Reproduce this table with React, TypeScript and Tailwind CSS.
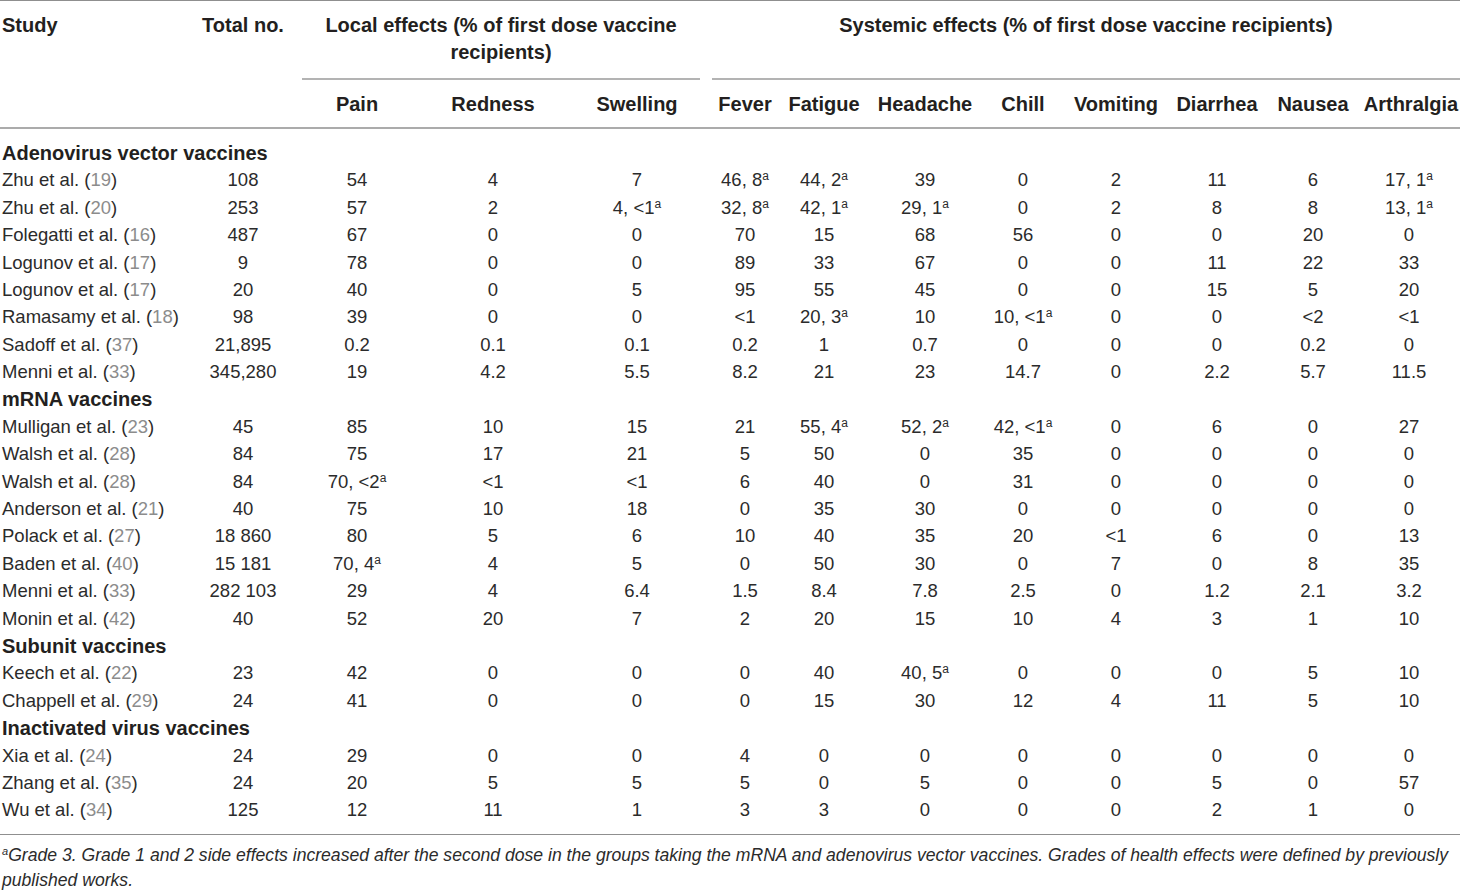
const cols =
  "grid grid-cols-[190px_112px_110px_162px_126px_12px_66px_92px_110px_86px_100px_102px_90px_102px]";

type Row = { cat: string } | { name: string; ref: string; vals: string[] };

const rows: Row[] = [
  { cat: "Adenovirus vector vaccines" },
  { name: "Zhu et al.", ref: "19", vals: ["108", "54", "4", "7", "46, 8^", "44, 2^", "39", "0", "2", "11", "6", "17, 1^"] },
  { name: "Zhu et al.", ref: "20", vals: ["253", "57", "2", "4, <1^", "32, 8^", "42, 1^", "29, 1^", "0", "2", "8", "8", "13, 1^"] },
  { name: "Folegatti et al.", ref: "16", vals: ["487", "67", "0", "0", "70", "15", "68", "56", "0", "0", "20", "0"] },
  { name: "Logunov et al.", ref: "17", vals: ["9", "78", "0", "0", "89", "33", "67", "0", "0", "11", "22", "33"] },
  { name: "Logunov et al.", ref: "17", vals: ["20", "40", "0", "5", "95", "55", "45", "0", "0", "15", "5", "20"] },
  { name: "Ramasamy et al.", ref: "18", vals: ["98", "39", "0", "0", "<1", "20, 3^", "10", "10, <1^", "0", "0", "<2", "<1"] },
  { name: "Sadoff et al.", ref: "37", vals: ["21,895", "0.2", "0.1", "0.1", "0.2", "1", "0.7", "0", "0", "0", "0.2", "0"] },
  { name: "Menni et al.", ref: "33", vals: ["345,280", "19", "4.2", "5.5", "8.2", "21", "23", "14.7", "0", "2.2", "5.7", "11.5"] },
  { cat: "mRNA vaccines" },
  { name: "Mulligan et al.", ref: "23", vals: ["45", "85", "10", "15", "21", "55, 4^", "52, 2^", "42, <1^", "0", "6", "0", "27"] },
  { name: "Walsh et al.", ref: "28", vals: ["84", "75", "17", "21", "5", "50", "0", "35", "0", "0", "0", "0"] },
  { name: "Walsh et al.", ref: "28", vals: ["84", "70, <2^", "<1", "<1", "6", "40", "0", "31", "0", "0", "0", "0"] },
  { name: "Anderson et al.", ref: "21", vals: ["40", "75", "10", "18", "0", "35", "30", "0", "0", "0", "0", "0"] },
  { name: "Polack et al.", ref: "27", vals: ["18 860", "80", "5", "6", "10", "40", "35", "20", "<1", "6", "0", "13"] },
  { name: "Baden et al.", ref: "40", vals: ["15 181", "70, 4^", "4", "5", "0", "50", "30", "0", "7", "0", "8", "35"] },
  { name: "Menni et al.", ref: "33", vals: ["282 103", "29", "4", "6.4", "1.5", "8.4", "7.8", "2.5", "0", "1.2", "2.1", "3.2"] },
  { name: "Monin et al.", ref: "42", vals: ["40", "52", "20", "7", "2", "20", "15", "10", "4", "3", "1", "10"] },
  { cat: "Subunit vaccines" },
  { name: "Keech et al.", ref: "22", vals: ["23", "42", "0", "0", "0", "40", "40, 5^", "0", "0", "0", "5", "10"] },
  { name: "Chappell et al.", ref: "29", vals: ["24", "41", "0", "0", "0", "15", "30", "12", "4", "11", "5", "10"] },
  { cat: "Inactivated virus vaccines" },
  { name: "Xia et al.", ref: "24", vals: ["24", "29", "0", "0", "4", "0", "0", "0", "0", "0", "0", "0"] },
  { name: "Zhang et al.", ref: "35", vals: ["24", "20", "5", "5", "5", "0", "5", "0", "0", "5", "0", "57"] },
  { name: "Wu et al.", ref: "34", vals: ["125", "12", "11", "1", "3", "3", "0", "0", "0", "2", "1", "0"] },
];

function Cell({ v }: { v: string }) {
  // trailing ^ marks a grade 3 footnote
  if (v.endsWith("^")) {
    return (
      <span>
        {v.slice(0, -1)}
        <sup className="text-[12px]">a</sup>
      </span>
    );
  }
  return <span>{v}</span>;
}

export default function App() {
  return (
    <div className="h-[892px] w-[1460px] overflow-hidden bg-white font-['Liberation_Sans',Arial,sans-serif] text-[18.5px] text-[#2b2b2b]">
      <div className="h-px bg-[#8f8f8f]" />

      {/* header */}
      <div className={`${cols} h-[79px] text-[20px] font-bold text-[#231f20]`}>
        <div className="pl-[2px] pt-[11px] leading-[27px]">Study</div>
        <div className="pt-[11px] pr-[6px] text-center leading-[27px]">Total no.</div>
        <div className="col-span-3 flex flex-col">
          <div className="flex-1 px-4 pt-[11px] text-center leading-[27px]">
            Local effects (% of first dose vaccine recipients)
          </div>
          <div className="h-[2px] bg-[#b3b3b3]" />
        </div>
        <div />
        <div className="col-span-8 flex flex-col">
          <div className="flex-1 pt-[11px] text-center leading-[27px]">
            Systemic effects (% of first dose vaccine recipients)
          </div>
          <div className="h-[2px] bg-[#b3b3b3]" />
        </div>
      </div>
      <div className={`${cols} h-[47px] items-center text-[20px] font-bold text-[#231f20]`}>
        <div />
        <div />
        <div className="text-center">Pain</div>
        <div className="text-center">Redness</div>
        <div className="text-center">Swelling</div>
        <div />
        <div className="text-center">Fever</div>
        <div className="text-center">Fatigue</div>
        <div className="text-center">Headache</div>
        <div className="text-center">Chill</div>
        <div className="text-center">Vomiting</div>
        <div className="text-center">Diarrhea</div>
        <div className="text-center">Nausea</div>
        <div className="whitespace-nowrap pl-1 text-center">Arthralgia</div>
      </div>
      <div className="h-[2px] bg-[#ababab]" />

      {/* body */}
      <div className="pt-[10px] pb-[10px]">
        {rows.map((r, i) =>
          "cat" in r ? (
            <div key={i} className="flex h-[27.4px] items-center pl-[2px] text-[20px] font-bold text-[#231f20]">
              {r.cat}
            </div>
          ) : (
            <div key={i} className={`${cols} h-[27.4px] items-center whitespace-nowrap`}>
              <div className="pl-[2px]">
                {r.name} (<span className="text-[#8c8c8c]">{r.ref}</span>)
              </div>
              <div className="pr-[6px] text-center">
                <Cell v={r.vals[0]} />
              </div>
              {r.vals.slice(1, 4).map((v, j) => (
                <div key={j} className="text-center">
                  <Cell v={v} />
                </div>
              ))}
              <div />
              {r.vals.slice(4).map((v, j) => (
                <div key={j} className="text-center">
                  <Cell v={v} />
                </div>
              ))}
            </div>
          ),
        )}
      </div>
      <div className="h-px bg-[#8f8f8f]" />

      {/* footnote */}
      <div className="pl-[2px] pt-[8px] text-[17.6px] italic leading-[25px] text-[#2b2b2b]">
        <div className="whitespace-nowrap">
          <sup className="text-[11px]">a</sup>Grade 3. Grade 1 and 2 side effects increased after the second dose in
          the groups taking the mRNA and adenovirus vector vaccines. Grades of health effects were defined by
          previously
        </div>
        <div>published works.</div>
      </div>
    </div>
  );
}
